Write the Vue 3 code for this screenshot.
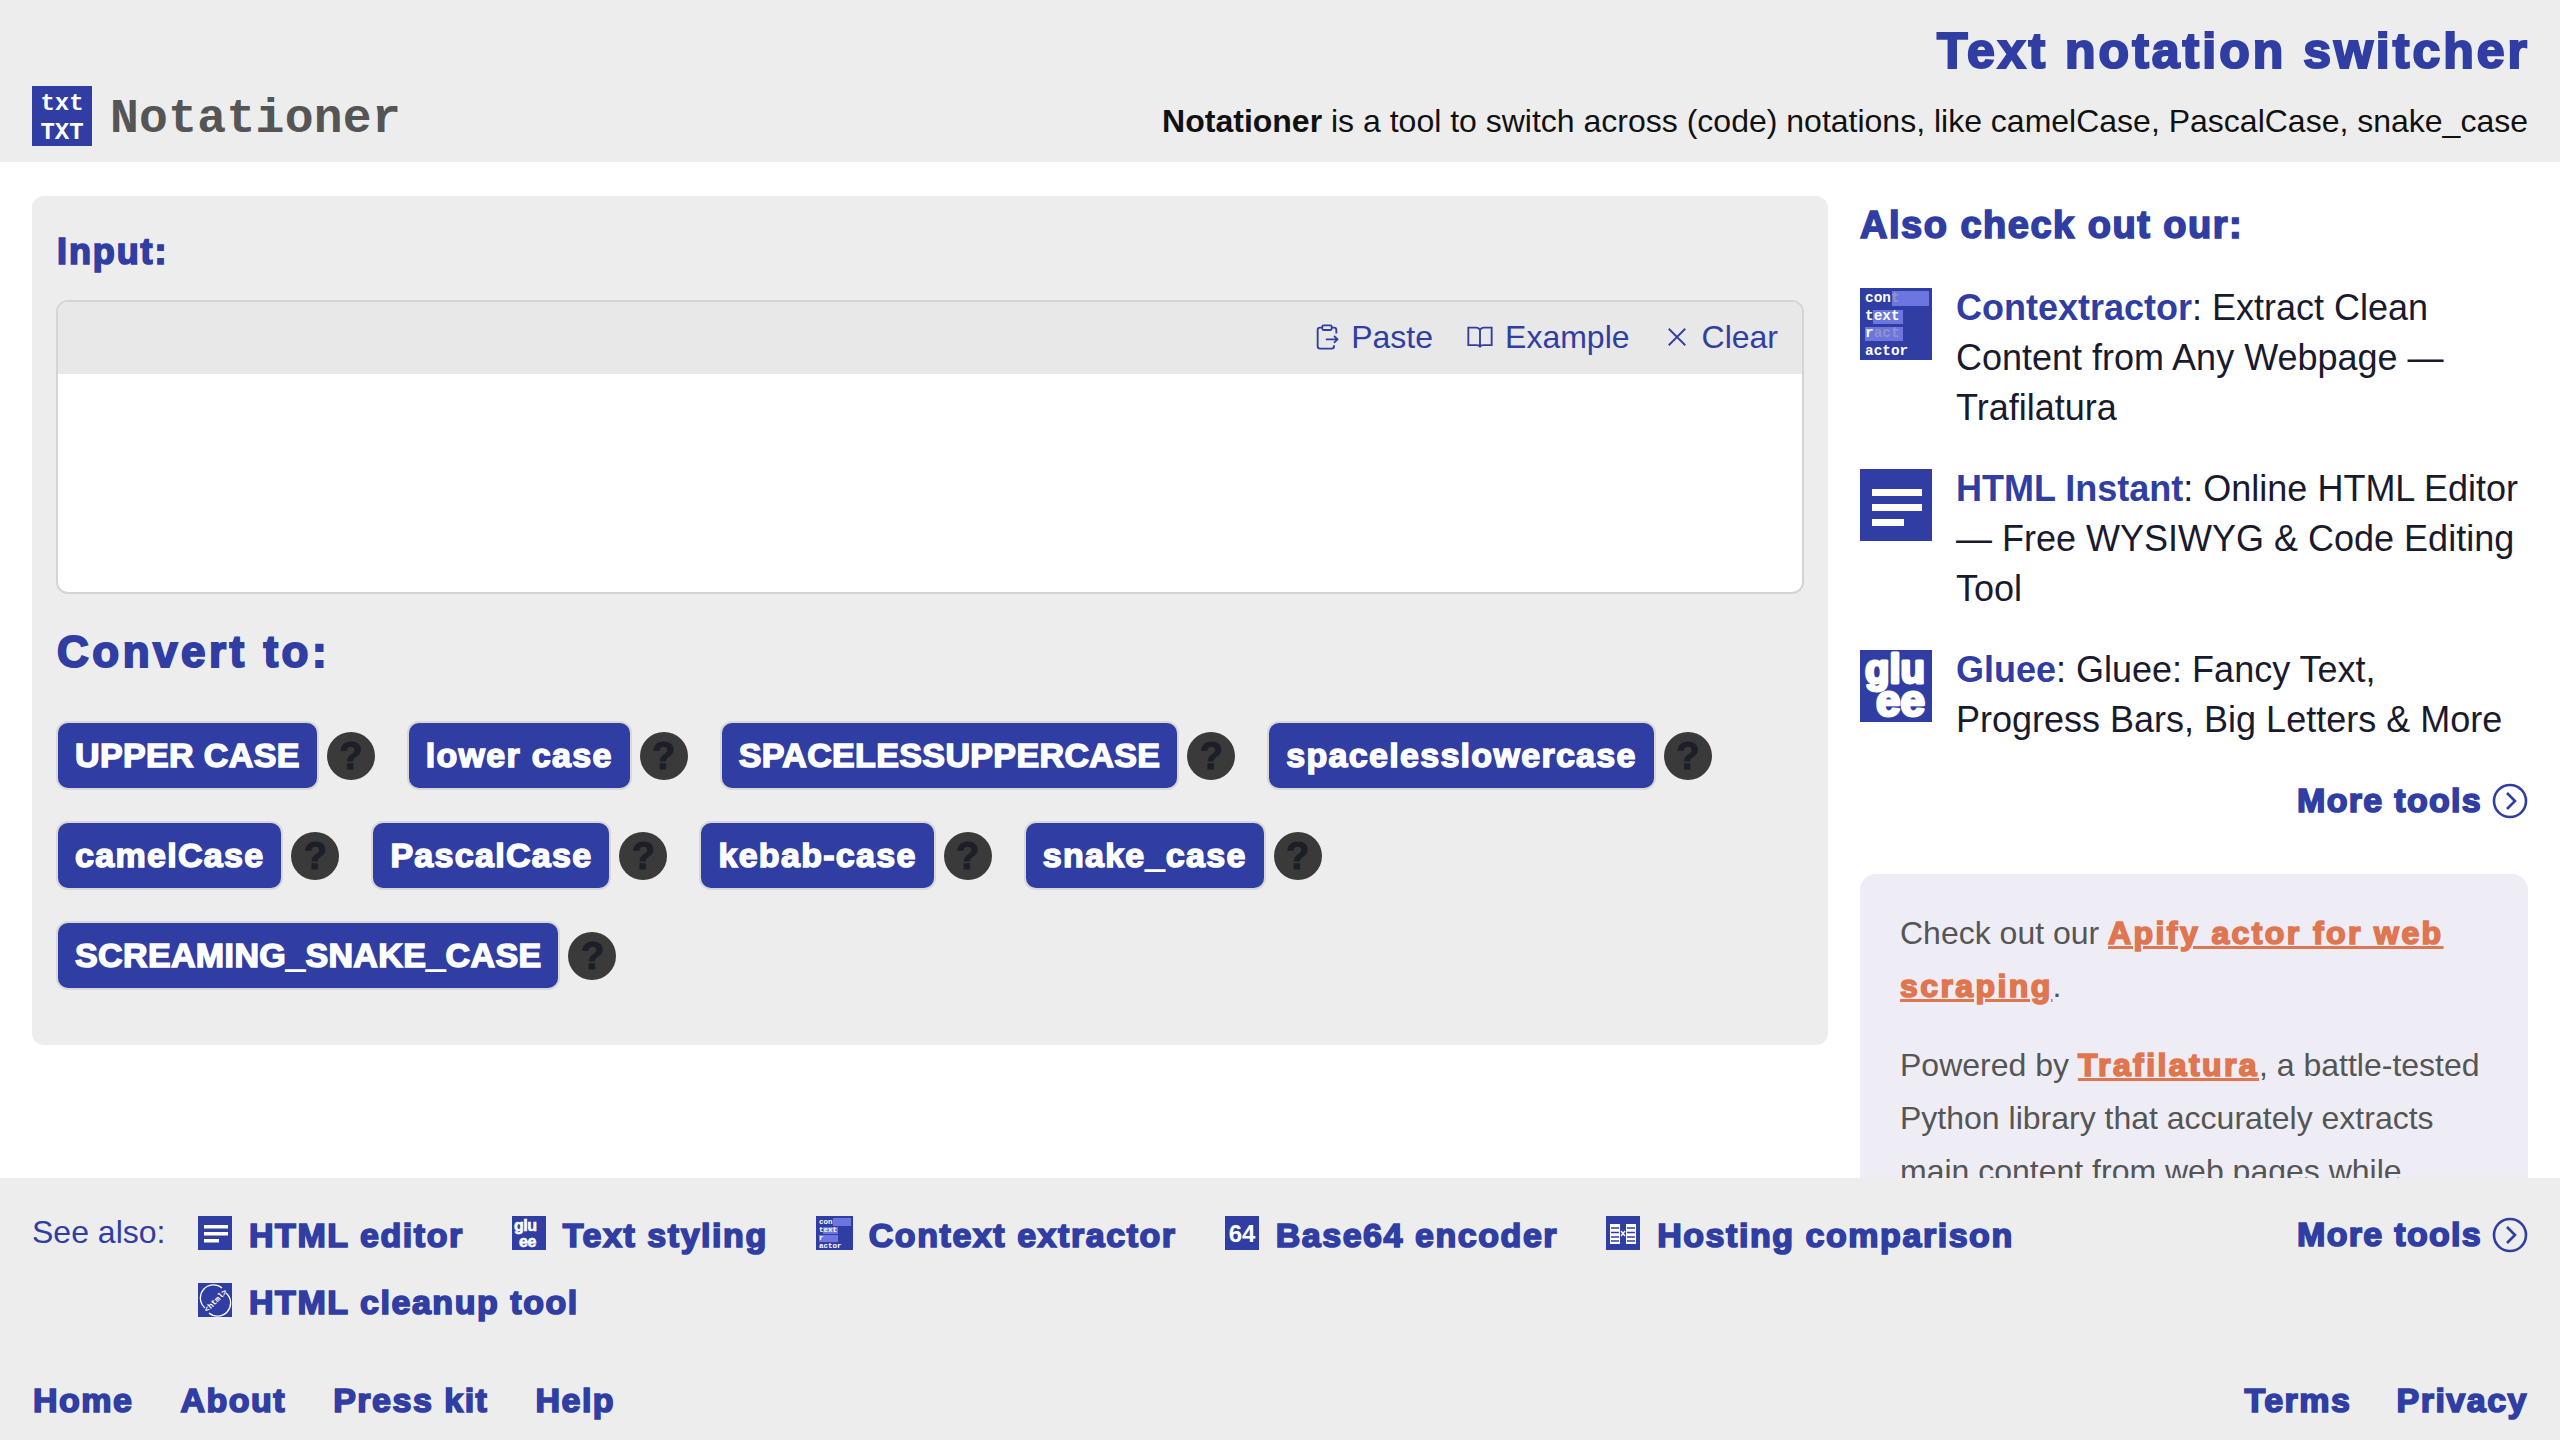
<script setup>
const rows = [
  ['UPPER CASE', 'lower case', 'SPACELESSUPPERCASE', 'spacelesslowercase'],
  ['camelCase', 'PascalCase', 'kebab-case', 'snake_case'],
  ['SCREAMING_SNAKE_CASE'],
]
const isMixed = (s) => /[a-z]/.test(s)
const tools = [
  { icon: 'ctx', name: 'Contextractor', lines: ': Extract Clean Content from Any Webpage — Trafilatura' },
  { icon: 'lines', name: 'HTML Instant', lines: ': Online HTML Editor — Free WYSIWYG & Code Editing Tool' },
  { icon: 'glue', name: 'Gluee', lines: ': Gluee: Fancy Text, Progress Bars, Big Letters & More' },
]
const seeAlso = [
  { icon: 'lines', label: 'HTML editor' },
  { icon: 'glue', label: 'Text styling' },
  { icon: 'ctx', label: 'Context extractor' },
  { icon: 'b64', label: 'Base64 encoder' },
  { icon: 'host', label: 'Hosting comparison' },
  { icon: 'clean', label: 'HTML cleanup tool' },
]
</script>

<template>
  <div class="page">
    <header class="head">
      <div class="brand">
        <svg class="logo" viewBox="0 0 60 60">
          <rect width="60" height="60" fill="#303ea3" />
          <text x="30" y="24" class="logo-t">txt</text>
          <text x="30" y="53" class="logo-t">TXT</text>
        </svg>
        <span class="brand-name">Notationer</span>
      </div>
      <div class="head-right">
        <h1>Text notation switcher</h1>
        <p><b>Notationer</b> is a tool to switch across (code) notations, like camelCase, PascalCase, snake_case</p>
      </div>
    </header>

    <main class="main">
      <section class="panel">
        <h3>Input:</h3>
        <div class="editor">
          <div class="toolbar">
            <span class="tool">
              <svg viewBox="0 0 24 24" width="28" height="30" fill="none" stroke="currentColor" stroke-width="1.6">
                <path d="M8 4H6a2 2 0 0 0-2 2v14a2 2 0 0 0 2 2h10a2 2 0 0 0 2-2v-1M16 4h2a2 2 0 0 1 2 2v3" />
                <rect x="8" y="2" width="8" height="4" rx="1" />
                <path d="M11 14h10M18 11l3 3-3 3" />
              </svg>
              Paste
            </span>
            <span class="tool">
              <svg viewBox="0 0 24 24" width="30" height="28" fill="none" stroke="currentColor" stroke-width="1.6">
                <path d="M12 6a4 4 0 0 0-3-2H2v15h7c1.500 0 3 .8 3 2 0-1.200 1.500-2 3-2h7V4h-7a4 4 0 0 0-3 2zM12 6v15" />
              </svg>
              Example
            </span>
            <span class="tool clear">
              <svg viewBox="0 0 24 24" width="22" height="22" fill="none" stroke="currentColor" stroke-width="2">
                <path d="M3 3l18 18M21 3L3 21" />
              </svg>
              <span class="clear-t">Clear</span>
            </span>
          </div>
          <div class="area"></div>
        </div>
        <h2>Convert to:</h2>
        <div class="rows">
          <div v-for="(row, i) in rows" :key="i" class="row">
            <div v-for="b in row" :key="b" class="pair">
              <span class="btn" :class="{ mixed: isMixed(b) }">{{ b }}</span>
              <span class="help">?</span>
            </div>
          </div>
        </div>
      </section>

      <aside class="side">
        <h3 class="also">Also check out our:</h3>
        <div v-for="t in tools" :key="t.name" class="item">
          <svg v-if="t.icon === 'ctx'" class="item-icon" viewBox="0 0 72 72">
            <rect width="72" height="72" fill="#303ea3" />
            <rect x="32" y="3" width="37" height="15" fill="#6d75e0" />
            <rect x="13" y="22" width="30" height="14" fill="#6d75e0" />
            <rect x="5" y="39" width="38" height="14" fill="#6d75e0" />
            <text x="5" y="14" class="ctx">con<tspan class="ctx-fade">t</tspan></text>
            <text x="5" y="32" class="ctx">text</text>
            <text x="5" y="49" class="ctx">r<tspan class="ctx-fade">act</tspan></text>
            <text x="5" y="67" class="ctx">actor</text>
          </svg>
          <svg v-else-if="t.icon === 'lines'" class="item-icon" viewBox="0 0 72 72">
            <rect width="72" height="72" fill="#303ea3" />
            <rect x="12" y="20" width="50" height="7" fill="#fff" />
            <rect x="12" y="35" width="50" height="7" fill="#fff" />
            <rect x="12" y="50" width="32" height="7" fill="#fff" />
          </svg>
          <svg v-else class="item-icon" viewBox="0 0 72 72">
            <rect width="72" height="72" fill="#303ea3" />
            <text x="5" y="33" class="glue">glu</text>
            <text x="16" y="66" class="glue glue-b">ee</text>
          </svg>
          <p class="item-text"><b>{{ t.name }}</b>{{ t.lines }}</p>
        </div>
        <div class="more-wrap">
          <span class="more">More tools
            <svg viewBox="0 0 36 36" width="36" height="36" fill="none" stroke="currentColor" stroke-width="2.600">
              <circle cx="18" cy="18" r="16" />
              <path d="M15 10l8 8-8 8" />
            </svg>
          </span>
        </div>
        <div class="promo">
          <p>Check out our <a>Apify actor for web scraping</a>.</p>
          <p>Powered by <a>Trafilatura</a>, a battle-tested Python library that accurately extracts main content from web pages while filtering out noise.</p>
        </div>
      </aside>
    </main>

    <footer class="foot">
      <div class="see">
        <span class="see-label">See also:</span>
        <div class="see-links">
          <span v-for="l in seeAlso" :key="l.label" class="see-link">
            <svg class="mini" :class="{ wide: l.icon === 'ctx' }" :viewBox="l.icon === 'ctx' ? '0 0 37 34' : '0 0 34 34'">
              <rect width="37" height="34" fill="#303ea3" />
              <template v-if="l.icon === 'lines'">
                <rect x="6" y="9" width="24" height="3.500" fill="#fff" />
                <rect x="6" y="16" width="24" height="3.500" fill="#fff" />
                <rect x="6" y="23" width="15" height="3.500" fill="#fff" />
              </template>
              <template v-else-if="l.icon === 'glue'">
                <text x="2" y="15" class="mini-glue">glu</text>
                <text x="7" y="31" class="mini-glue">ee</text>
              </template>
              <template v-else-if="l.icon === 'ctx'">
                <rect x="17" y="2" width="18" height="8" fill="#6d75e0" />
                <rect x="7" y="11" width="15" height="7" fill="#6d75e0" />
                <rect x="3" y="19" width="19" height="7" fill="#6d75e0" />
                <text x="3" y="8" class="mini-ctx">con</text>
                <text x="3" y="16" class="mini-ctx">text</text>
                <text x="3" y="24" class="mini-ctx">r</text>
                <text x="3" y="32" class="mini-ctx">actor</text>
              </template>
              <template v-else-if="l.icon === 'b64'">
                <text x="17" y="26" class="mini-b64">64</text>
              </template>
              <template v-else-if="l.icon === 'host'">
                <rect x="4" y="8" width="10" height="20" fill="#fff" />
                <rect x="20" y="8" width="10" height="20" fill="#fff" />
                <path d="M5 12h8M5 16.500h8M5 21h8M5 25h8M21 12h8M21 16.500h8M21 21h8M21 25h8" stroke="#303ea3" stroke-width="1.500" />
                <path d="M15 15l4 5M19 15l-4 5" stroke="#fff" stroke-width="1.300" />
              </template>
              <template v-else>
                <path d="M7 25A13 13 0 0 1 24 5M28 10A13 13 0 0 1 11 30" fill="none" stroke="#fff" stroke-width="1.300" />
                <text x="17" y="20.500" class="mini-clean" transform="rotate(-45 17 17)">&lt;html&gt;</text>
              </template>
            </svg>
            {{ l.label }}
          </span>
        </div>
        <span class="more more-foot">More tools
          <svg viewBox="0 0 36 36" width="36" height="36" fill="none" stroke="currentColor" stroke-width="2.600">
            <circle cx="18" cy="18" r="16" />
            <path d="M15 10l8 8-8 8" />
          </svg>
        </span>
      </div>
      <nav class="bottom">
        <div class="nav nav-left"><a>Home</a><a>About</a><a>Press kit</a><a>Help</a></div>
        <div class="nav nav-right"><a>Terms</a><a>Privacy</a></div>
      </nav>
    </footer>
  </div>
</template>

<style>
html, body { margin: 0; background: #fff; }
</style>

<style scoped>
.page {
  height: 1440px;
  display: flex;
  flex-direction: column;
  overflow: hidden;
  font-family: "Liberation Sans", Arial, sans-serif;
  color: #1a1a2e;
  --blue: #303ea3;
}
b, h1, h2, h3, .btn, .see-link, .more, .nav a, .promo a {
  font-weight: 700;
  -webkit-text-stroke: 1.7px currentColor;
}
.head {
  height: 162px;
  flex: none;
  background: #ededed;
  display: flex;
  justify-content: space-between;
  padding: 0 32px;
  box-sizing: border-box;
}
.brand { display: flex; align-items: center; gap: 18px; align-self: flex-end; padding-bottom: 16px; }
.logo { width: 60px; height: 60px; display: block; }
.logo-t {
  font-family: "Liberation Mono", monospace;
  font-size: 24px;
  font-weight: 700;
  fill: #fff;
  text-anchor: middle;
}
.brand-name {
  font-family: "Liberation Mono", monospace;
  font-weight: 700;
  font-size: 48px;
  letter-spacing: .3px;
  color: #555;
  margin-top: 6px;
}
.head-right { text-align: right; align-self: flex-end; padding-bottom: 21px; }
h1 {
  margin: 0 -2px 22px 0;
  font-size: 50px;
  line-height: 56px;
  color: var(--blue);
  letter-spacing: 3px;
  -webkit-text-stroke-width: 2.2px;
}
.head-right p { margin: 0; font-size: 32px; line-height: 40px; color: #111; }
.head-right b { -webkit-text-stroke: 0; }
.main {
  flex: 1;
  min-height: 0;
  overflow: hidden;
  display: flex;
  gap: 32px;
  padding: 34px 32px 0;
}
.panel {
  width: 1796px;
  height: 849px;
  flex: none;
  box-sizing: border-box;
  background: #ededed;
  border-radius: 12px;
  padding: 35px 24px 0;
}
.panel h3 {
  margin: 0 0 27px 1px;
  font-size: 36px;
  line-height: 42px;
  color: var(--blue);
  letter-spacing: 1.9px;
}
.editor {
  height: 294px;
  box-sizing: border-box;
  border: 2px solid #d4d4d4;
  border-radius: 12px;
  background: #fff;
  overflow: hidden;
}
.toolbar {
  height: 72px;
  box-sizing: border-box;
  padding: 0 24px 2px 0;
  background: #e8e8e8;
  display: flex;
  justify-content: flex-end;
  align-items: center;
  gap: 32px;
  font-size: 32px;
  color: var(--blue);
}
.tool { display: inline-flex; align-items: center; gap: 10px; }
.clear { margin-left: 4px; }
.clear-t { margin-left: 4px; }
.panel h2 {
  margin: 32px 0 0 1px;
  font-size: 44px;
  line-height: 52px;
  color: var(--blue);
  letter-spacing: 3.5px;
  -webkit-text-stroke-width: 2px;
}
.rows { margin-top: 45px; padding-left: 2px; display: flex; flex-direction: column; gap: 35px; }
.row { display: flex; gap: 34px; }
.pair { display: flex; align-items: center; gap: 10px; }
.btn {
  box-sizing: border-box;
  height: 65px;
  line-height: 65px;
  padding: 0 17px;
  background: var(--blue);
  box-shadow: 0 0 0 2px #d8d8d8;
  border-radius: 10px;
  color: #fff;
  font-size: 34px;
  letter-spacing: .37px;
  -webkit-text-stroke-width: 1.5px;
}
.btn.mixed { letter-spacing: 1.3px; }
.help {
  width: 48px;
  height: 48px;
  border-radius: 50%;
  background: #3a3a3a;
  color: #1c1f27;
  text-align: center;
  font-weight: 700;
  font-size: 38px;
  line-height: 48px;
  -webkit-text-stroke: 1px #1c1f27;
}
.side { flex: 1; min-width: 0; }
.also {
  margin: 7px 0 41px;
  font-size: 38px;
  line-height: 44px;
  color: var(--blue);
  letter-spacing: 1.5px;
}
.item { display: flex; gap: 24px; margin-bottom: 36px; }
.item-icon { width: 72px; height: 72px; flex: none; display: block; }
.item-text { margin: -5px 0 0; font-size: 36px; line-height: 50px; }
.item-text b { color: var(--blue); -webkit-text-stroke: 0; }
.ctx {
  font-family: "Liberation Mono", monospace;
  font-size: 14.4px;
  font-weight: 700;
  fill: #fff;
}
.ctx-fade { fill: #8f94c8; }
.glue {
  font-family: "Liberation Sans", sans-serif;
  font-size: 40px;
  font-weight: 700;
  fill: #fff;
  stroke: #fff;
  stroke-width: 3px;
  stroke-linejoin: round;
}
.glue-b { font-size: 44px; }
.more {
  display: inline-flex;
  align-items: center;
  gap: 10px;
  color: var(--blue);
  font-size: 34px;
  letter-spacing: 1.3px;
}
.more svg { -webkit-text-stroke: 0; }
.more-wrap { display: flex; justify-content: flex-end; margin: 1px 0 54px; }
.promo {
  background: #eeedf6;
  border-radius: 16px;
  padding: 33px 40px;
  font-size: 32px;
  line-height: 53px;
  color: #555;
}
.promo p { margin: 0 0 26px; }
.promo a { color: #e07650; text-decoration: underline; letter-spacing: 2.4px; }
.foot {
  height: 262px;
  flex: none;
  background: #ededed;
  box-sizing: border-box;
  padding: 32px 32px 0;
  position: relative;
}
.see { display: flex; align-items: flex-start; }
.see-label { font-size: 32px; line-height: 44px; color: var(--blue); width: 166px; flex: none; }
.see-links { flex: 1; margin-top: 8px; display: flex; flex-wrap: wrap; gap: 33px 48px; max-width: 1900px; }
.see-link {
  display: inline-flex;
  align-items: center;
  gap: 17px;
  font-size: 34px;
  line-height: 34px;
  color: var(--blue);
  letter-spacing: 1.55px;
}
.mini { width: 34px; height: 34px; flex: none; display: block; margin-top: -4px; }
.mini.wide { width: 37px; margin-right: -1px; }
.mini-glue { font: 700 16px "Liberation Sans", sans-serif; fill: #fff; stroke: #fff; stroke-width: .6px; letter-spacing: -.5px; -webkit-text-stroke: 0; }
.mini-ctx { font: 700 7.500px "Liberation Mono", monospace; fill: #fff; letter-spacing: 0; -webkit-text-stroke: 0; }
.mini-b64 { font: 700 24px "Liberation Sans", sans-serif; fill: #fff; text-anchor: middle; letter-spacing: 0; -webkit-text-stroke: 0; }
.mini-clean { font: 700 8px "Liberation Mono", monospace; fill: #fff; text-anchor: middle; letter-spacing: 0; -webkit-text-stroke: 0; }
.more-foot { margin-left: auto; margin-top: 5px; }
.bottom {
  position: absolute;
  left: 32px;
  right: 32px;
  bottom: 20px;
  display: flex;
  justify-content: space-between;
}
.nav { display: flex; gap: 47px; }
.nav-left { padding-left: 1px; }
.nav-right { gap: 45px; }
.nav a { font-size: 34px; line-height: 40px; color: var(--blue); letter-spacing: 1.5px; }
</style>
